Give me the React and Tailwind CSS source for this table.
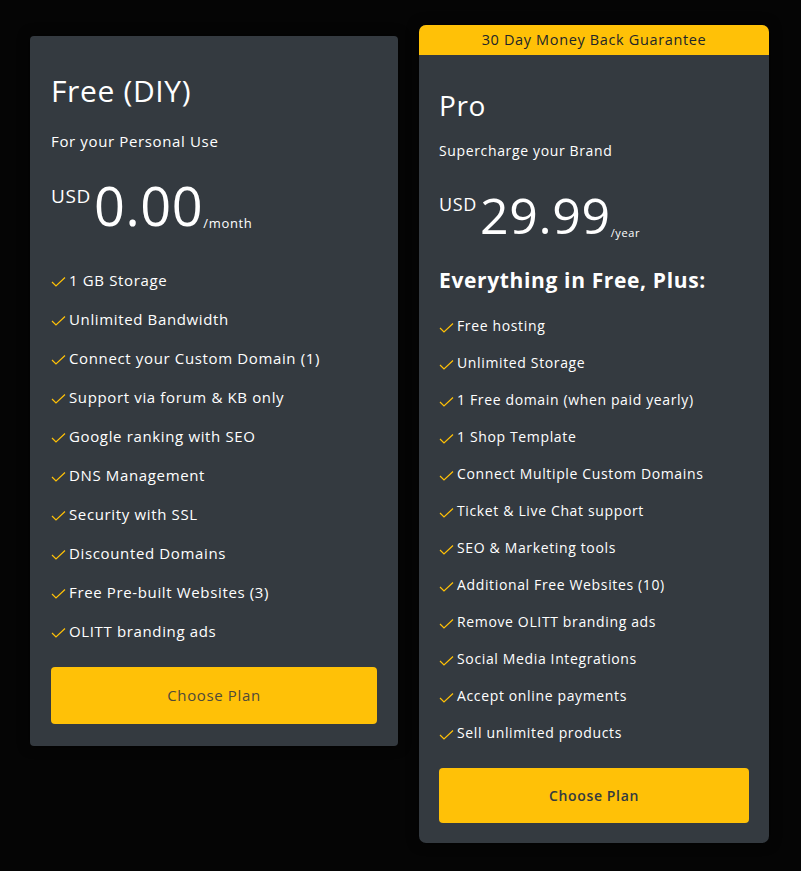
import { Fragment } from "react";

const font = { fontFamily: '"Open Sans", "Liberation Sans", sans-serif' };

const freeFeatures = [
  "1 GB Storage",
  "Unlimited Bandwidth",
  "Connect your Custom Domain (1)",
  "Support via forum & KB only",
  "Google ranking with SEO",
  "DNS Management",
  "Security with SSL",
  "Discounted Domains",
  "Free Pre-built Websites (3)",
  "OLITT branding ads",
];

const proFeatures = [
  "Free hosting",
  "Unlimited Storage",
  "1 Free domain (when paid yearly)",
  "1 Shop Template",
  "Connect Multiple Custom Domains",
  "Ticket & Live Chat support",
  "SEO & Marketing tools",
  "Additional Free Websites (10)",
  "Remove OLITT branding ads",
  "Social Media Integrations",
  "Accept online payments",
  "Sell unlimited products",
];

function Check() {
  return (
    <svg width="15" height="10" viewBox="0 0 15 10" fill="none" className="shrink-0 mt-[9px]">
      <polyline points="1,5 5,9 14,0.5" stroke="#ffc107" strokeWidth="1.2" />
    </svg>
  );
}

function FeatureList({ items, gap, size }) {
  return (
    <ul className={`flex flex-col ${gap}`}>
      {items.map(item => (
        <li key={item} className={`flex items-start gap-[3px] ${size} text-white leading-[24px]`}>
          <Check />
          <span>{item}</span>
        </li>
      ))}
    </ul>
  );
}

export default function App() {
  return (
    <div style={font} className="min-h-[871px] w-full bg-[#050505] tracking-[0.04em] flex items-start gap-[21px] pl-[30px] pt-[25px]">
      {/* Free card */}
      <div className="mt-[11px] w-[368px] h-[710px] rounded-[4px] bg-[#343a40] shadow-[0_0_12px_rgba(0,0,0,0.6)] px-[21px] pt-[36px] pb-[22px] flex flex-col">
        <h2 className="text-[30px] leading-[38px] text-white">Free (DIY)</h2>
        <p className="mt-[20px] text-[15px] leading-[22px] text-white">For your Personal Use</p>
        <div className="mt-[25px] flex items-start text-white h-[56px]">
          <span className="text-[19px] leading-[24px] mt-[7px]">USD</span>
          <span className="text-[54px] leading-[56px] ml-[3px]">0.00</span>
          <span className="text-[13px] self-end leading-[16px] mb-[2px]">/month</span>
        </div>
        <div className="mt-[35px]">
          <FeatureList items={freeFeatures} gap="gap-[15px]" size="text-[15px]" />
        </div>
        <button className="mt-auto h-[57px] w-full rounded-[4px] bg-[#ffc107] text-[15px] text-[#4f4a3a]">
          Choose Plan
        </button>
      </div>

      {/* Pro card */}
      <div className="w-[350px] h-[818px] rounded-[7px] bg-[#343a40] shadow-[0_0_12px_rgba(0,0,0,0.6)] flex flex-col overflow-hidden">
        <div className="h-[30px] bg-[#ffc107] flex items-center justify-center text-[14.5px] font-medium text-[#212529]">
          30 Day Money Back Guarantee
        </div>
        <div className="flex-1 px-[20px] pt-[32px] pb-[20px] flex flex-col">
          <h2 className="text-[28px] leading-[36px] text-white">Pro</h2>
          <p className="mt-[18px] text-[14px] leading-[20px] text-white">Supercharge your Brand</p>
          <div className="mt-[27px] flex items-start text-white h-[54px]">
            <span className="text-[18px] leading-[24px] mt-[4px]">USD</span>
            <span className="text-[50px] leading-[54px] ml-[3px]">29.99</span>
            <span className="text-[11px] self-end leading-[14px] mb-[2px]">/year</span>
          </div>
          <h3 className="mt-[23px] text-[21px] leading-[30px] font-bold text-white">Everything in Free, Plus:</h3>
          <div className="mt-[19px]">
            <FeatureList items={proFeatures} gap="gap-[13px]" size="text-[14px]" />
          </div>
          <button className="mt-auto h-[55px] w-full rounded-[4px] bg-[#ffc107] text-[14px] font-semibold text-[#343a40]">
            Choose Plan
          </button>
        </div>
      </div>
    </div>
  );
}
